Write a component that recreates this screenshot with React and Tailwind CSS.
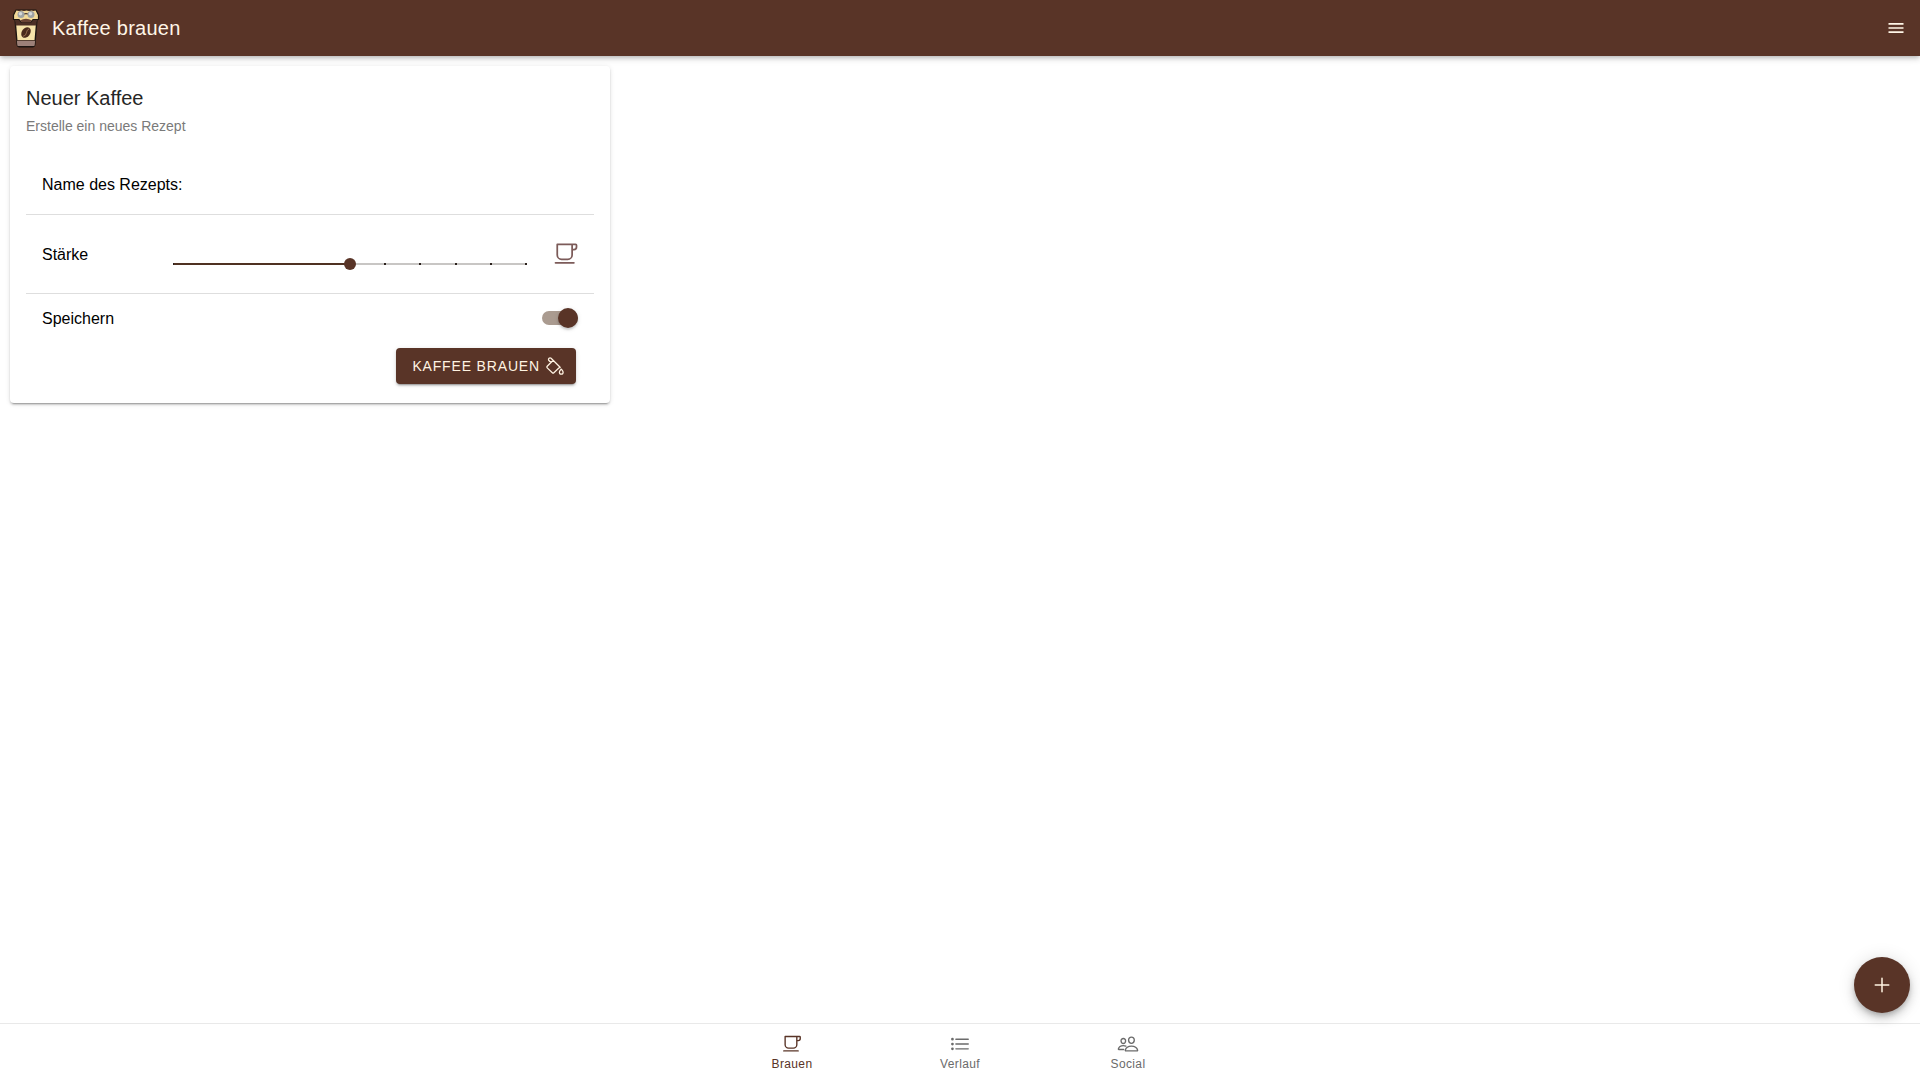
import React, { useState } from "react";
import {
  IoAdd,
  IoCafeOutline,
  IoColorFillOutline,
  IoListOutline,
  IoMenuSharp,
  IoPeopleOutline,
} from "react-icons/io5";

const TICKS = [0, 1, 2, 3, 4, 5, 6, 7, 8, 9, 10];

function Logo() {
  return (
    <svg viewBox="0 0 28 40" className="h-10 w-7" aria-hidden="true">
      <path d="M3 11h22l-2.2 26a2 2 0 0 1-2 1.7H7.200a2 2 0 0 1-2-1.700z" fill="#f7e3a9" stroke="#1d1511" strokeWidth="1.400" />
      <path d="M3.200 11h21.600l-.5 6.500H3.700z" fill="#4c2f25" />
      <path d="M4.900 32.500h18.200l-.5 4.700a1 1 0 0 1-1 .9H6.400a1 1 0 0 1-1-.9z" fill="#9c8078" />
      <path d="M4.900 32.500h18.200" stroke="#3a241c" strokeWidth="0.800" />
      <path d="M4 2h20l2.500 5v4.500h-5.500l-2 2.500h-10l-2-2.500H1.500V7z" fill="#f3da98" stroke="#1d1511" strokeWidth="1.200" strokeLinejoin="round" />
      <path d="M8 12.500q6-3.500 12 0l-2 1.800h-8z" fill="#6b4434" />
      <path d="M5.500 2.500h17" stroke="#4c2f25" strokeWidth="1.200" strokeDasharray="3 2" />
      <path d="M11 6.500q3-1.800 6 0" fill="none" stroke="#4c3a30" strokeWidth="1.200" />
      <circle cx="9" cy="6.500" r="3.500" fill="#9fa3a4" />
      <circle cx="19" cy="6.500" r="3.500" fill="#9fa3a4" />
      <circle cx="8.500" cy="5.700" r="1.800" fill="#d5d8d8" />
      <circle cx="18.500" cy="5.700" r="1.800" fill="#d5d8d8" />
      <g transform="rotate(35 14 24.500)">
        <ellipse cx="14" cy="24.500" rx="4.200" ry="5.800" fill="#4b2a1c" />
        <path d="M14.500 19.500q-1.500 2.500 0 5t-.8 5" fill="none" stroke="#a87e5c" strokeWidth="0.700" />
      </g>
    </svg>
  );
}

function StrengthSlider({ value, onChange }) {
  return (
    <div className="relative flex h-8 flex-1 items-center">
      <div className="absolute inset-x-1.5 h-0.5 bg-[#c8c6c4]">
        {TICKS.map((t) => (
          <span key={t} className="absolute h-0.5 w-0.5 -translate-x-1/2 bg-[#2b211d]" style={{ left: `${t * 10}%` }} />
        ))}
        <div className="absolute h-0.5 bg-[#4f3122]" style={{ width: `${value * 10}%` }} />
      </div>
      <input
        id="strength"
        type="range"
        min="0"
        max="10"
        value={value}
        onChange={(e) => onChange(Number(e.target.value))}
        className="relative h-3 w-full cursor-pointer appearance-none bg-transparent [&::-webkit-slider-thumb]:size-3 [&::-webkit-slider-thumb]:appearance-none [&::-webkit-slider-thumb]:rounded-full [&::-webkit-slider-thumb]:bg-[#593427]"
      />
    </div>
  );
}

function Tab({ icon: Icon, label, active }) {
  return (
    <a
      href="#"
      aria-current={active ? "page" : undefined}
      className={`flex h-14 w-42 flex-col items-center justify-center pt-px text-xs tracking-[0.03em] ${active ? "text-[#593427]" : "text-[#6b6b6b]"}`}
    >
      <Icon className="size-5.5" />
      <span className="mt-px">{label}</span>
    </a>
  );
}

export default function App() {
  const [strength, setStrength] = useState(5);
  const [save, setSave] = useState(true);
  const [name, setName] = useState("");

  return (
    <div className="flex min-h-screen flex-col bg-white font-['Liberation_Sans',Arial,sans-serif] text-black">
      <header className="flex h-14 items-center bg-[#593427] pr-3.5 pl-3 text-[#fff6e8] shadow-[0_2px_4px_-1px_rgba(0,0,0,0.2),0_4px_5px_0_rgba(0,0,0,0.08),0_1px_10px_0_rgba(0,0,0,0.08)]">
        <Logo />
        <h1 className="ml-3 flex-1 text-xl tracking-[0.0125em]">Kaffee brauen</h1>
        <button type="button" aria-label="Menü">
          <IoMenuSharp className="size-5" />
        </button>
      </header>

      <main className="relative flex-1 p-2.5">
        <section className="max-w-150 rounded px-4 pt-4 pb-[19px] shadow-[0_3px_1px_-2px_rgba(0,0,0,0.2),0_2px_2px_0_rgba(0,0,0,0.14),0_1px_5px_0_rgba(0,0,0,0.12)]">
          <h2 className="text-xl leading-8 text-[#262626]">Neuer Kaffee</h2>
          <p className="text-sm leading-6 text-[#7a7a7a]">Erstelle ein neues Rezept</p>

          <form onSubmit={(e) => e.preventDefault()}>
            <div className="mt-[17px] flex h-15 items-center gap-2 border-b border-[#dedede] px-4">
              <label htmlFor="recipe">Name des Rezepts:</label>
              <input
                id="recipe"
                type="text"
                value={name}
                onChange={(e) => setName(e.target.value)}
                className="min-w-0 flex-1 bg-transparent outline-none"
              />
            </div>

            <div className="flex h-[79px] items-center border-b border-[#dedede] pr-3.5 pl-4">
              <label htmlFor="strength" className="w-[126px] pt-px">Stärke</label>
              <div className="flex flex-1 pt-5">
                <StrengthSlider value={strength} onChange={setStrength} />
              </div>
              <IoCafeOutline className="ml-5 size-7 text-[#7c5b59]" />
            </div>

            <div className="flex h-12 items-center justify-between px-4">
              <label htmlFor="save" className="pt-0.5">Speichern</label>
              <span className="relative flex h-5 w-9 items-center">
                <input
                  id="save"
                  type="checkbox"
                  role="switch"
                  checked={save}
                  onChange={(e) => setSave(e.target.checked)}
                  className="peer h-3.5 w-9 cursor-pointer appearance-none rounded-full bg-[#c4c2c0] checked:bg-[#aa9b90]"
                />
                <span className="pointer-events-none absolute left-0 size-5 rounded-full bg-white shadow-[0_2px_2px_0_rgba(0,0,0,0.14),0_1px_5px_0_rgba(0,0,0,0.12)] peer-checked:left-4 peer-checked:bg-[#593427]" />
              </span>
            </div>

            <div className="mt-1.5 flex justify-end pr-4.5">
              <button
                type="submit"
                className="flex h-9 items-center gap-[5px] rounded bg-[#593427] pr-[11px] pl-4 text-sm tracking-[0.06em] text-[#fff3e2] uppercase shadow-[0_3px_1px_-2px_rgba(0,0,0,0.2),0_2px_2px_0_rgba(0,0,0,0.14),0_1px_5px_0_rgba(0,0,0,0.12)]"
              >
                Kaffee brauen
                <IoColorFillOutline className="size-5" />
              </button>
            </div>
          </form>
        </section>

        <button
          type="button"
          aria-label="Neues Rezept"
          className="absolute right-2.5 bottom-2.5 flex size-14 items-center justify-center rounded-full bg-[#593427] text-[#fff3e2] shadow-[0_3px_5px_-1px_rgba(0,0,0,0.2),0_6px_10px_0_rgba(0,0,0,0.14),0_1px_18px_0_rgba(0,0,0,0.12)]"
        >
          <IoAdd className="size-6" />
        </button>
      </main>

      <nav className="flex justify-center border-t border-[#e9e9e9] bg-white">
        <Tab icon={IoCafeOutline} label="Brauen" active />
        <Tab icon={IoListOutline} label="Verlauf" />
        <Tab icon={IoPeopleOutline} label="Social" />
      </nav>
    </div>
  );
}
